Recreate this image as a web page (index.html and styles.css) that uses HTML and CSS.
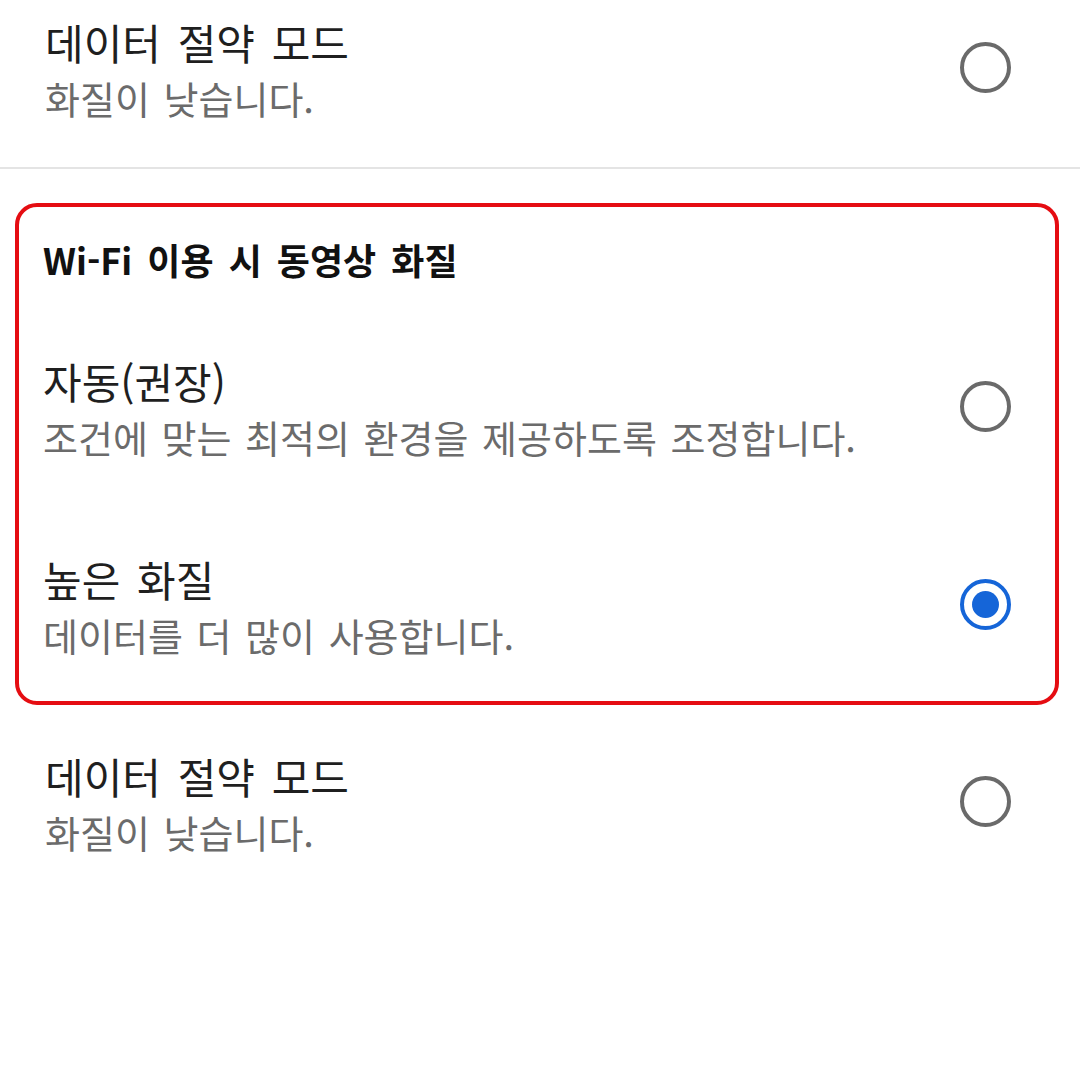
FILE: index.html
```html
<!DOCTYPE html>
<html lang="ko">
<head>
<meta charset="utf-8">
<link rel="stylesheet" href="styles.css">
</head>
<body>
<div class="screen">
  <div class="row row-top">
    <div class="texts">
      <div class="title">데이터 절약 모드</div>
      <div class="sub">화질이 낮습니다.</div>
    </div>
    <span class="radio"></span>
  </div>
  <div class="divider"></div>
  <section class="box">
    <h2 class="header">Wi-Fi 이용 시 동영상 화질</h2>
    <div class="row row-in row-first">
      <div class="texts">
        <div class="title">자동(권장)</div>
        <div class="sub">조건에 맞는 최적의 환경을 제공하도록 조정합니다.</div>
      </div>
      <span class="radio"></span>
    </div>
    <div class="row row-in row-last">
      <div class="texts">
        <div class="title">높은 화질</div>
        <div class="sub">데이터를 더 많이 사용합니다.</div>
      </div>
      <span class="radio checked"></span>
    </div>
  </section>
  <div class="row row-bottom">
    <div class="texts">
      <div class="title">데이터 절약 모드</div>
      <div class="sub">화질이 낮습니다.</div>
    </div>
    <span class="radio"></span>
  </div>
</div>
</body>
</html>
```
FILE: styles.css
```css
html, body {
  margin: 0;
  padding: 0;
  background: #ffffff;
}
body {
  width: 1080px;
  height: 1080px;
  overflow: hidden;
  font-family: "Noto Sans CJK KR", "Noto Sans", sans-serif;
}
.screen {
  display: flex;
  flex-direction: column;
}
.row {
  display: flex;
  align-items: center;
  justify-content: space-between;
}
.texts {
  display: flex;
  flex-direction: column;
}
.title {
  font-size: 42px;
  line-height: 54px;
  color: #1f1f1f;
  word-spacing: 5px;
}
.sub {
  font-size: 38px;
  line-height: 58px;
  color: #6b6b6b;
  word-spacing: 3px;
}
.radio {
  width: 43px;
  height: 43px;
  border: 4.5px solid #6a6a6a;
  border-radius: 50%;
  box-sizing: content-box;
  margin-bottom: 8px;
  flex: none;
  display: flex;
  align-items: center;
  justify-content: center;
}
.radio.checked {
  border-color: #1565d8;
}
.radio.checked::after {
  content: "";
  width: 27px;
  height: 27px;
  border-radius: 50%;
  background: #1565d8;
}
.row-top {
  padding: 15px 69px 40px 45px;
}
.divider {
  height: 2px;
  background: #e4e4e4;
}
.box {
  margin: 34px 21px 0 15px;
  border: 4px solid #e50d12;
  border-radius: 22px;
  padding: 28px 0 0 0;
}
.header {
  margin: 0;
  padding: 0 0 0 24px;
  font-size: 36px;
  line-height: 48px;
  font-weight: 700;
  color: #111111;
  word-spacing: 5px;
}
.row-in {
  padding: 43px 44px 43px 24px;
}
.row-first {
  padding-top: 71px;
}
.row-last {
  padding-top: 43px;
  padding-bottom: 37px;
}
.row-bottom {
  padding: 44px 69px 0 45px;
}
```
